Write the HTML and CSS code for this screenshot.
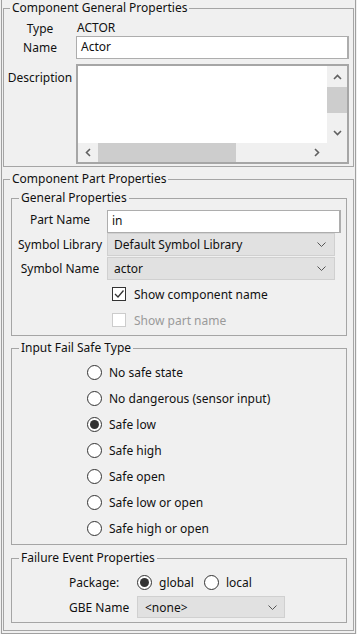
FILE: index.html
```html
<!DOCTYPE html>
<html lang="en">
<head>
    <meta charset="UTF-8">
    <title>Component Properties</title>
    <link rel="stylesheet" href="styles.css">
</head>
<body>
    <div class="frame">
        <fieldset class="group outer">
            <legend>Component General Properties</legend>
            <div class="form form-general">
                <span class="lbl">Type</span>
                <span class="val">ACTOR</span>
                <span class="lbl">Name</span>
                <div class="field field-name">Actor</div>
                <span class="lbl lbl-top">Description</span>
                <div class="textarea">
                    <div class="ta-main">
                        <div class="ta-text"></div>
                        <div class="vscroll">
                            <div class="sb-btn sb-v">
                                <svg width="9" height="6" viewBox="0 0 9 6"><path d="M1 5 L4.5 1.5 L8 5" stroke="#606060" stroke-width="1.6" fill="none"/></svg>
                            </div>
                            <div class="sb-thumb-v"></div>
                            <div class="sb-fill"></div>
                            <div class="sb-btn sb-v">
                                <svg width="9" height="6" viewBox="0 0 9 6"><path d="M1 1 L4.5 4.5 L8 1" stroke="#606060" stroke-width="1.6" fill="none"/></svg>
                            </div>
                        </div>
                    </div>
                    <div class="ta-bottom">
                        <div class="hscroll">
                            <div class="sb-btn sb-h">
                                <svg width="6" height="9" viewBox="0 0 6 9"><path d="M5 1 L1.5 4.5 L5 8" stroke="#606060" stroke-width="1.6" fill="none"/></svg>
                            </div>
                            <div class="sb-thumb-h"></div>
                            <div class="sb-fill"></div>
                            <div class="sb-btn sb-h">
                                <svg width="6" height="9" viewBox="0 0 6 9"><path d="M1 1 L4.5 4.5 L1 8" stroke="#606060" stroke-width="1.6" fill="none"/></svg>
                            </div>
                        </div>
                        <div class="sb-corner"></div>
                    </div>
                </div>
            </div>
        </fieldset>

        <fieldset class="group outer part">
            <legend>Component Part Properties</legend>

            <fieldset class="group inner general-props">
                <legend>General Properties</legend>
                <div class="form form-part">
                    <span class="lbl lbl-raised">Part Name</span>
                    <div class="field field-part">in</div>
                    <span class="lbl">Symbol Library</span>
                    <div class="combo combo-wide">
                        <span>Default Symbol Library</span>
                        <svg width="9" height="5" viewBox="0 0 9 5"><path d="M0.5 0.5 L4.5 4.5 L8.5 0.5" stroke="#555" fill="none"/></svg>
                    </div>
                    <span class="lbl">Symbol Name</span>
                    <div class="combo combo-wide combo-second">
                        <span>actor</span>
                        <svg width="9" height="5" viewBox="0 0 9 5"><path d="M0.5 0.5 L4.5 4.5 L8.5 0.5" stroke="#555" fill="none"/></svg>
                    </div>
                    <div class="check-row first">
                        <span class="checkbox">
                            <svg width="12" height="12" viewBox="0 0 12 12"><path d="M2 6 L5 9 L10.5 2.5" stroke="#333" stroke-width="1.3" fill="none"/></svg>
                        </span>
                        <span>Show component name</span>
                    </div>
                    <div class="check-row disabled">
                        <span class="checkbox"></span>
                        <span>Show part name</span>
                    </div>
                </div>
            </fieldset>

            <fieldset class="group inner fail-safe">
                <legend>Input Fail Safe Type</legend>
                <div class="radio-list">
                    <div class="radio-row"><span class="radio"></span><span>No safe state</span></div>
                    <div class="radio-row"><span class="radio"></span><span>No dangerous (sensor input)</span></div>
                    <div class="radio-row"><span class="radio checked"></span><span>Safe low</span></div>
                    <div class="radio-row"><span class="radio"></span><span>Safe high</span></div>
                    <div class="radio-row"><span class="radio"></span><span>Safe open</span></div>
                    <div class="radio-row"><span class="radio"></span><span>Safe low or open</span></div>
                    <div class="radio-row"><span class="radio"></span><span>Safe high or open</span></div>
                </div>
            </fieldset>

            <fieldset class="group inner failure">
                <legend>Failure Event Properties</legend>
                <div class="form form-failure">
                    <span class="lbl">Package:</span>
                    <div class="radio-inline">
                        <span class="radio checked"></span><span>global</span>
                        <span class="radio second"></span><span>local</span>
                    </div>
                    <span class="lbl">GBE Name</span>
                    <div class="combo combo-gbe">
                        <span>&lt;none&gt;</span>
                        <svg width="9" height="5" viewBox="0 0 9 5"><path d="M0.5 0.5 L4.5 4.5 L8.5 0.5" stroke="#555" fill="none"/></svg>
                    </div>
                </div>
            </fieldset>
        </fieldset>
    </div>
</body>
</html>
```

FILE: styles.css
```css
body {
    margin: 0;
    background: #f0f0f0;
    font-family: "Noto Sans", "Liberation Sans", sans-serif;
    font-size: 12px;
    color: #111;
}
.frame {
    margin-left: 1px;
    width: 355px;
    height: 634px;
    box-sizing: border-box;
    border: 1px solid #a0a0a0;
    border-top: none;
    padding: 1px 1px 2px 1px;
    overflow: hidden;
}
.group {
    margin: 0;
    padding: 0;
    border: 1px solid #a5a5a5;
    min-width: 0;
}
.group legend {
    padding: 0 2px;
    line-height: 14px;
    height: 14px;
}
.outer legend {
    margin-left: 6px;
}
.inner legend {
    margin-left: 7px;
}
.outer {
    padding: 5px 0 2px 0;
}
.part {
    margin-top: 5px;
    padding: 0 0 7px 0;
}
.inner {
    margin: 5px 6px 0 7px;
}

/* label / value grids */
.form {
    display: grid;
    align-items: center;
}
.lbl {
    text-align: center;
    white-space: nowrap;
}
.lbl-top {
    align-self: start;
    padding-top: 10px;
}
.lbl-raised {
    margin-top: -5px;
}
.form-general {
    grid-template-columns: 66px 273px;
    column-gap: 3px;
    padding-left: 3px;
    grid-template-rows: 16px 23px 105px;
}
.val {
    line-height: 16px;
    padding-left: 1px;
}
.field {
    box-sizing: border-box;
    height: 23px;
    background: #fff;
    border: 1px solid #adadad;
    border-right-width: 2px;
    padding-left: 4px;
    line-height: 20px;
}
.textarea {
    align-self: end;
    box-sizing: border-box;
    height: 100px;
    border: 2px solid #a6a6a6;
    display: flex;
    flex-direction: column;
    background: #f0f0f0;
}
.ta-main {
    flex: 1;
    display: flex;
}
.ta-text {
    flex: 1;
    background: #fff;
}
.vscroll {
    width: 20px;
    display: flex;
    flex-direction: column;
}
.sb-btn {
    display: flex;
    align-items: center;
    justify-content: center;
}
.sb-v {
    height: 21px;
}
.sb-h {
    width: 20px;
}
.sb-thumb-v {
    height: 26px;
    background: #cdcdcd;
}
.sb-fill {
    flex: 1;
}
.ta-bottom {
    height: 19px;
    display: flex;
}
.hscroll {
    flex: 1;
    display: flex;
}
.sb-thumb-h {
    width: 138px;
    background: #cdcdcd;
}
.sb-corner {
    width: 20px;
}

/* part properties */
.general-props {
    padding: 5px 0 2px 0;
}
.form-part {
    grid-template-columns: 88px 234px;
    column-gap: 3px;
    padding-left: 4px;
}
.field-part {
    width: 234px;
}
.combo {
    box-sizing: border-box;
    height: 23px;
    background: #e1e1e1;
    border: 1px solid #d0d0d0;
    display: flex;
    align-items: center;
    justify-content: space-between;
    padding: 0 8px 0 6px;
}
.combo-wide {
    width: 228px;
}
.combo-second {
    margin-top: 1px;
}
.check-row {
    grid-column: 2;
    height: 26px;
    display: flex;
    align-items: center;
    gap: 8px;
    padding-left: 5px;
}
.check-row.first {
    margin-top: 1px;
}
.checkbox {
    box-sizing: border-box;
    width: 14px;
    height: 14px;
    background: #fff;
    border: 1px solid #333;
    display: flex;
    align-items: center;
    justify-content: center;
}
.check-row.disabled {
    color: #9a9a9a;
}
.check-row.disabled .checkbox {
    border-color: #cccccc;
}

/* radios */
.fail-safe {
    padding: 4px 0 3px 0;
}
.radio-list {
    padding-left: 75px;
}
.radio-row {
    height: 26px;
    display: flex;
    align-items: center;
    gap: 7px;
}
.radio {
    box-sizing: border-box;
    width: 15px;
    height: 15px;
    border-radius: 50%;
    border: 1px solid #333;
    background: #fff;
    display: inline-flex;
    align-items: center;
    justify-content: center;
    flex: none;
}
.radio.checked::after {
    content: "";
    width: 9px;
    height: 9px;
    border-radius: 50%;
    background: #333;
}

/* failure event */
.failure {
    margin-top: 6px;
    padding: 5px 0 4px 0;
}
.form-failure {
    grid-template-columns: 59px auto;
    grid-template-rows: 24px 22px;
    row-gap: 2px;
    column-gap: 9px;
    padding-left: 57px;
    justify-items: start;
}
.radio-inline {
    display: flex;
    align-items: center;
    gap: 7px;
}
.radio.second {
    margin-left: 3px;
}
.combo-gbe {
    width: 148px;
    height: 22px;
    padding-left: 7px;
    padding-right: 7px;
}
```
